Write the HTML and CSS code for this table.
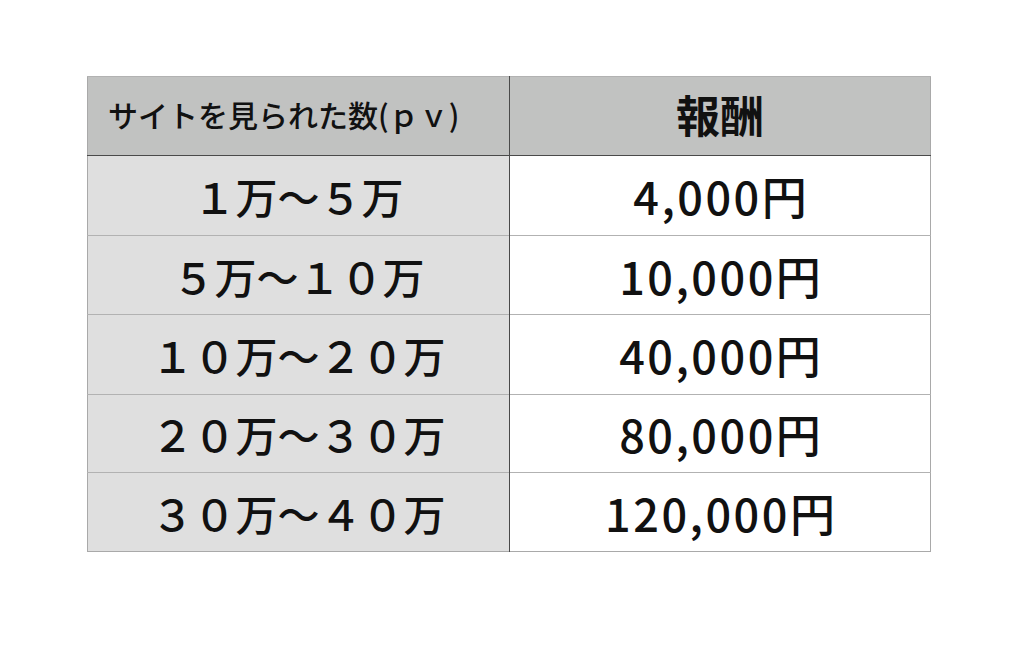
FILE: index.html
```html
<!DOCTYPE html>
<html lang="ja">
<head>
<meta charset="utf-8">
<link rel="stylesheet" href="styles.css">
</head>
<body>
<div class="page">
  <table class="rates">
    <thead>
      <tr class="r-head">
        <th class="c-left head-left">サイトを見られた数(ｐｖ)</th>
        <th class="c-right head-right">報酬</th>
      </tr>
    </thead>
    <tbody>
      <tr class="r1"><td class="c-left">１万～５万</td><td class="c-right">4,000円</td></tr>
      <tr class="r2"><td class="c-left">５万～１０万</td><td class="c-right">10,000円</td></tr>
      <tr class="r3"><td class="c-left">１０万～２０万</td><td class="c-right">40,000円</td></tr>
      <tr class="r4"><td class="c-left">２０万～３０万</td><td class="c-right">80,000円</td></tr>
      <tr class="r5"><td class="c-left">３０万～４０万</td><td class="c-right">120,000円</td></tr>
    </tbody>
  </table>
</div>
</body>
</html>
```
FILE: styles.css
```css
html, body {
  margin: 0;
  padding: 0;
  background: #ffffff;
}
.page {
  padding: 76px 0 0 87px;
  font-family: "Noto Sans CJK JP", "Noto Sans", sans-serif;
  color: #111;
}
.rates {
  border-collapse: collapse;
  table-layout: fixed;
  width: 844px;
  border: 1px solid #a9a9a9;
}
.rates th, .rates td {
  padding: 0;
  text-align: center;
  vertical-align: middle;
  border-top: 1px solid #b2b2b2;
}
.rates .c-left {
  width: 421px;
  background: #dfdfdf;
  border-right: 1px solid #4a4a4a;
  font-size: 42px;
  font-weight: 500;
}
.rates .c-right {
  background: #ffffff;
  font-size: 45px;
  font-weight: 500;
  letter-spacing: 2.5px;
  text-indent: 2.5px;
}
.rates .r-head th {
  background: #c1c2c1;
  height: 74px;
  padding-bottom: 4px;
  border-bottom: 1px solid #4a4a4a;
}
.rates .head-left {
  font-size: 30px;
  text-align: left;
  text-indent: 20px;
}
.rates .head-right {
  font-size: 44px;
  font-weight: 700;
  letter-spacing: 0;
  text-indent: 0;
}
.r1 td { height: 79px; }
.r2 td { height: 78px; }
.r3 td { height: 79px; }
.r4 td { height: 77px; }
.r5 td { height: 78px; }
```
